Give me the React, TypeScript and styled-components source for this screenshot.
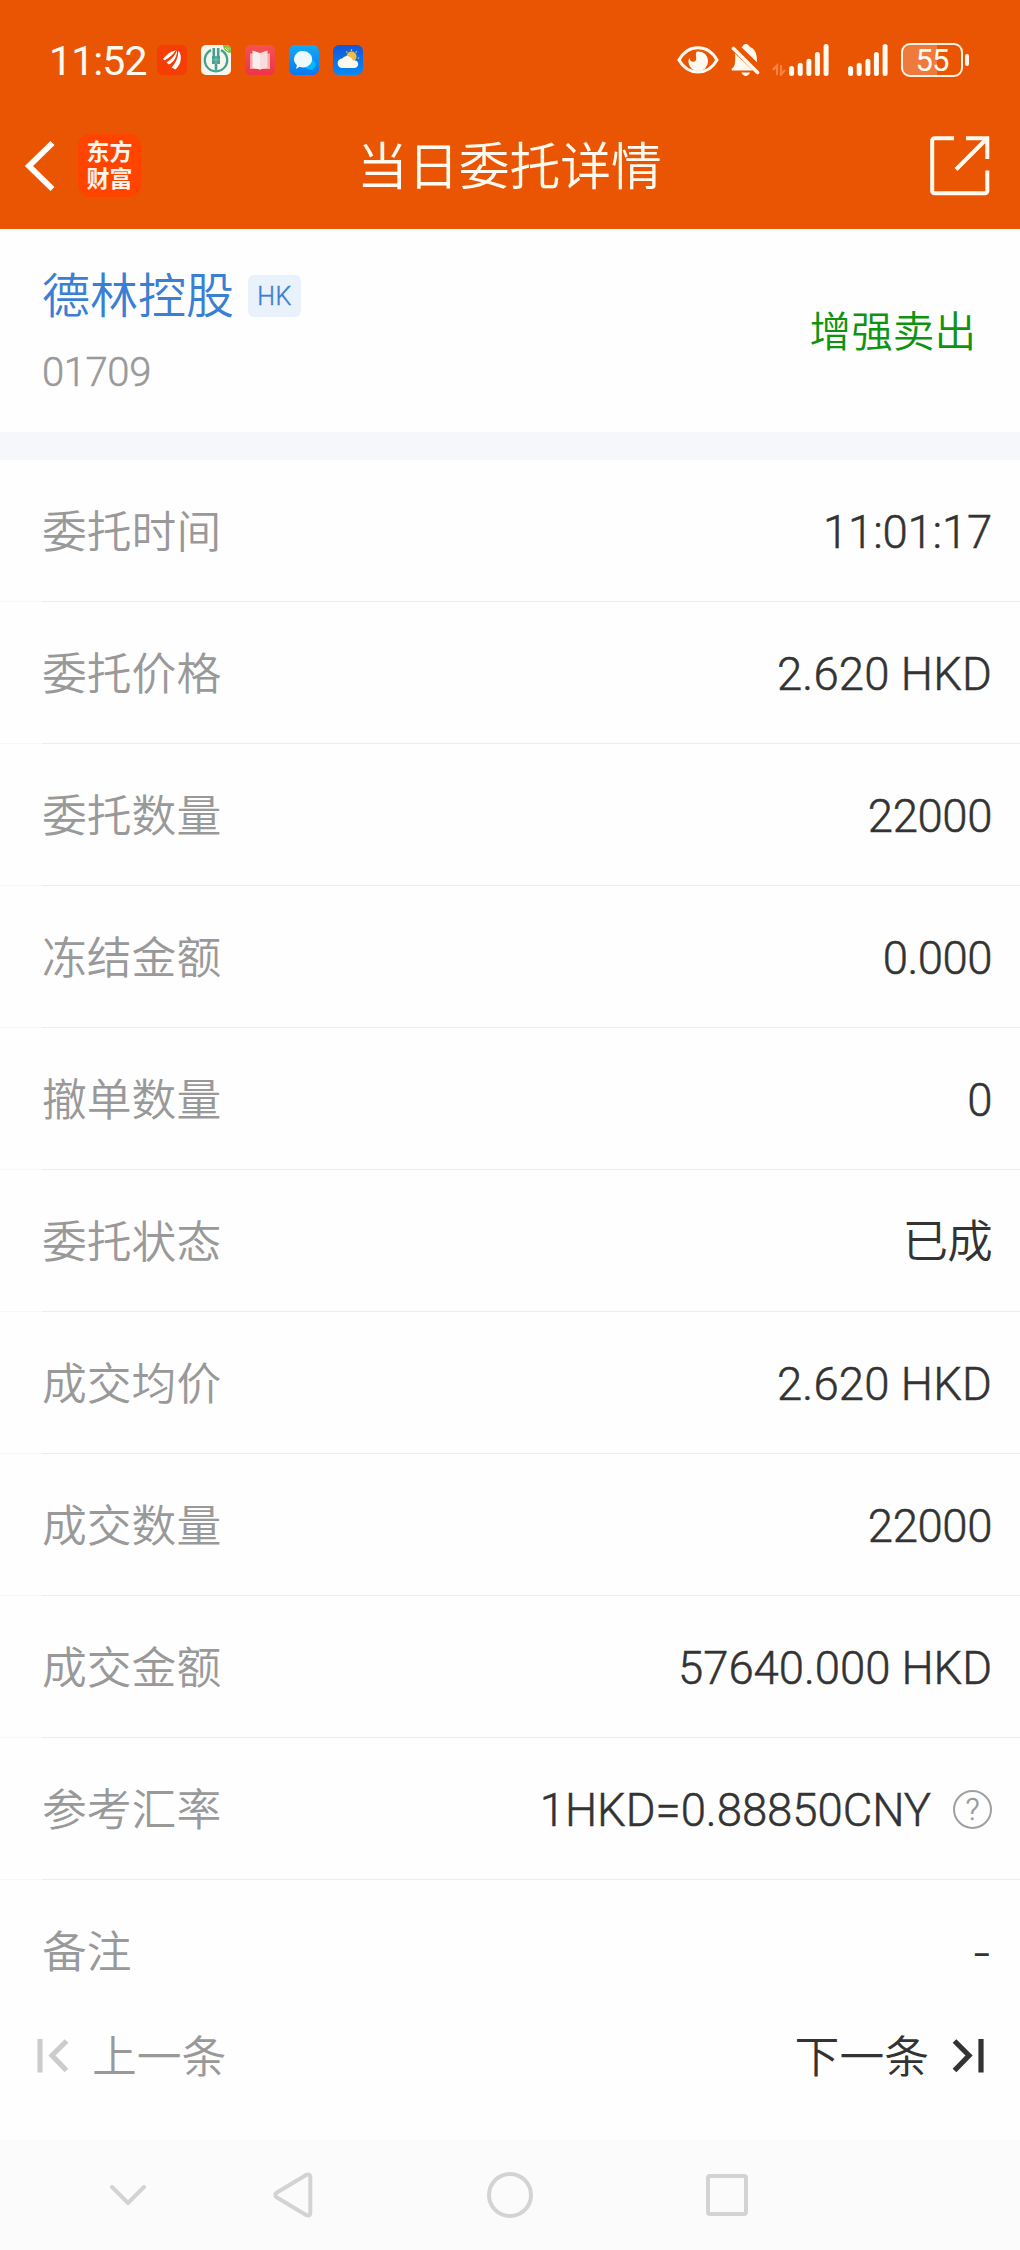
import React from "react";
import styled, { createGlobalStyle } from "styled-components";

const GlobalStyle = createGlobalStyle`
  *, *::before, *::after { box-sizing: border-box; }
  body {
    margin: 0;
    background: #fefefe;
    font-family: Roboto, "Noto Sans CJK SC", sans-serif;
    -webkit-font-smoothing: antialiased;
  }
`;

const Screen = styled.main`
  display: flex;
  flex-direction: column;
  width: 1020px;
  height: 2250px;
  overflow: hidden;
  background: #fefefe;
  font-weight: 350;
`;

const Header = styled.header`
  display: flex;
  flex-direction: column;
  height: 229px;
  flex: none;
  background: #e95503;
  color: #fffaf0;
`;

const StatusBar = styled.div`
  display: flex;
  justify-content: space-between;
  align-items: center;
  height: 102px;
  padding: 18px 51px 0 49px;
  font-weight: 400;
`;

const StatusGroup = styled.div`
  display: flex;
  align-items: center;
`;

const Clock = styled.span`
  width: 108px;
  padding-top: 2px;
  font-size: 41px;
  line-height: 42px;
  letter-spacing: -0.9px;
  white-space: nowrap;
`;

const AppIcons = styled.div`
  display: flex;
  gap: 14px;
`;

const TitleBar = styled.div`
  display: grid;
  grid-template-columns: 1fr auto 1fr;
  align-items: center;
  height: 127px;
  padding: 0 30px 0 24px;
`;

const TitleLeft = styled.div`
  display: flex;
  align-items: center;
  gap: 22px;
`;

const TitleRight = styled.div`
  display: flex;
  justify-content: flex-end;
`;

const Title = styled.h1`
  margin: 0;
  padding: 4px 0 0 5px;
  font-size: 50.8px;
  line-height: 60px;
  font-weight: inherit;
`;

const Brand = styled.div`
  display: flex;
  flex-direction: column;
  align-items: center;
  justify-content: center;
  width: 63px;
  height: 63px;
  border-radius: 12px;
  background: #ff4400;
  color: #fff4ec;
  font-size: 23px;
  line-height: 27px;
  font-weight: 700;
`;

const Stock = styled.section`
  display: flex;
  justify-content: space-between;
  align-items: center;
  height: 203px;
  flex: none;
  padding: 0 44px 0 42px;
`;

const StockInfo = styled.div`
  display: flex;
  flex-direction: column;
  gap: 28px;
  padding-top: 8px;
`;

const StockName = styled.div`
  display: flex;
  align-items: center;
  gap: 14px;
  height: 48px;
  font-size: 48px;
  line-height: 48px;
  color: #3b7fd4;
`;

const NameText = styled.span`
  padding-top: 2px;
`;

const Market = styled.span`
  width: 53px;
  height: 42px;
  border-radius: 6px;
  background: #e9f1fb;
  font-size: 25px;
  line-height: 44px;
  letter-spacing: 0.4px;
  text-align: center;
  -webkit-text-stroke: 0.4px currentColor;
`;

const Code = styled.div`
  font-size: 40px;
  line-height: 48px;
  letter-spacing: -0.4px;
  padding-top: 1px;
  -webkit-text-stroke: 0.5px currentColor;
  color: #999;
`;

const Side = styled.div`
  padding-top: 5px;
  font-size: 41.6px;
  line-height: 50px;
  color: #0f9410;
`;

const Gap = styled.div`
  height: 28px;
  flex: none;
  background: #f6f7fa;
`;

const List = styled.dl`
  margin: 0;
  flex: none;
`;

const Row = styled.div<{ $last?: boolean }>`
  display: flex;
  align-items: center;
  justify-content: space-between;
  height: 142px;
  padding: 0 28px 0 42px;
  background: ${(p) =>
    p.$last
      ? "none"
      : "linear-gradient(90deg, #f7f7f7 42px, #ebebeb 42px) bottom / 100% 1px no-repeat"};
`;

const Label = styled.dt`
  padding-top: 3px;
  font-size: 44.8px;
  line-height: 60px;
  color: #999;
`;

const Value = styled.dd`
  display: flex;
  align-items: center;
  gap: 22px;
  margin: 0;
  color: #333;
`;

const Amount = styled.span<{ $spacing?: number; $kind: "number" | "dash" | "text" }>`
  padding-top: 3px;
  font-family: ${(p) => (p.$kind === "dash" ? "Inter, sans-serif" : "inherit")};
  font-size: 45.5px;
  line-height: 60px;
  letter-spacing: ${(p) => p.$spacing ?? 0}px;
  -webkit-text-stroke: ${(p) => (p.$kind === "number" ? "0.5px" : "0")} currentColor;
`;

const Pager = styled.nav`
  display: flex;
  justify-content: space-between;
  height: 118px;
  flex: none;
  padding: 4px 36px 0 37px;
`;

const PagerLink = styled.div<{ $disabled?: boolean }>`
  display: flex;
  align-items: center;
  gap: 23px;
  height: 60px;
  font-size: 44.8px;
  line-height: 60px;
  color: ${(p) => (p.$disabled ? "#999" : "#333")};
`;

const PagerText = styled.span`
  padding-top: 3px;
`;

const SystemBar = styled.div`
  display: grid;
  grid-template-columns: 163px 214px 219px 42px;
  align-items: center;
  height: 110px;
  flex: none;
  padding-left: 110px;
  background: #fbfbfb;
`;

const TileFrame = styled.svg`
  display: block;
  width: 30px;
  height: 30px;
`;

const EastMoneyTile = () => (
  <TileFrame viewBox="0 0 30 30">
    <rect width="30" height="30" rx="6" fill="#f53d05" />
    <path d="M6 14C9.500 9.500 13.500 6.300 19 5.200C16.500 9.500 12 13 7.500 15.500Z" fill="#fff" />
    <path d="M9.500 17.500C14.500 14.500 18 10.500 20 5.200C21 10.500 18 16 12 19.500Z" fill="#fff" />
    <path d="M14.500 22.500C18.500 18.500 21.300 13 21.300 5.500C25.500 10.500 24.500 19 18.500 24.500Z" fill="#fff" />
    <path d="M6.500 16.500C13 13.500 17 9.500 19.600 5.200M12 20.500C17.500 17 20.500 12 20.700 5.200" fill="none" stroke="#f53d05" strokeWidth="1" />
  </TileFrame>
);

const BankTile = () => (
  <TileFrame viewBox="0 0 30 30">
    <rect width="30" height="30" rx="5" fill="#f8f6ec" />
    <path d="M22 0h3a5 5 0 0 1 5 5v3c-4 0-8-3-8-8Z" fill="#7fc241" />
    <path d="M24 3l3 3M26 2.500l2 2" stroke="#e5f5d2" strokeWidth="1" />
    <path d="M10 5.100a11.200 11.200 0 1 0 10 0" fill="none" stroke="#45a191" strokeWidth="2.300" />
    <path d="M12.800 3v9M17.200 3v9M15 18v7" stroke="#45a191" strokeWidth="2.600" />
    <path d="M11 11h8v8h-8Z" fill="#45a191" />
    <path d="M11.500 14.800h7M15 11v8" stroke="#8cc7bb" strokeWidth=".8" />
  </TileFrame>
);

const BookTile = () => (
  <TileFrame viewBox="0 0 30 30">
    <defs>
      <linearGradient id="book" x2="0" y2="1">
        <stop stopColor="#f45353" />
        <stop offset="1" stopColor="#ee3349" />
      </linearGradient>
    </defs>
    <rect width="30" height="30" rx="6" fill="url(#book)" />
    <path d="M5 8.500h20v15.500H16l-1 1-1-1H5Z" fill="#f9a9ab" />
    <path d="M7.500 5.500l7.500 2.500v16.500l-7.500-2Z" fill="#fdeeee" />
    <path d="M22.500 5.500L15 8v16.500l7.500-2Z" fill="#fbdcdc" />
  </TileFrame>
);

const ChatTile = () => (
  <TileFrame viewBox="0 0 30 30">
    <defs>
      <linearGradient id="chat" x2="0" y2="1">
        <stop stopColor="#12aaf4" />
        <stop offset="1" stopColor="#0678f2" />
      </linearGradient>
    </defs>
    <rect width="30" height="30" rx="6" fill="url(#chat)" />
    <path d="M15 20.500a6 4.600 0 1 1 8.500 3l1 1.500-4-.6a6 5 0 0 1-5.500-3.900Z" fill="#06b9fb" />
    <path d="M14 6a9 8.200 0 1 1-3.500 15.700L7 24l.9-3.800A8.700 8.200 0 0 1 14 6Z" fill="#eef9ff" />
  </TileFrame>
);

const WeatherTile = () => (
  <TileFrame viewBox="0 0 30 30">
    <defs>
      <linearGradient id="sky" x2="0" y2="1">
        <stop stopColor="#1257d8" />
        <stop offset="1" stopColor="#078af5" />
      </linearGradient>
    </defs>
    <rect width="30" height="30" rx="6" fill="url(#sky)" />
    <circle cx="18.500" cy="11.500" r="5" fill="#f4bd3e" />
    <path d="M18.500 4.300v1.700M13.300 6.500l1 1M23.700 6.500l-1 1M24.700 13h1.500" stroke="#f4cd63" strokeWidth="1.200" />
    <path d="M9.500 23a4.700 4.700 0 0 1-.4-9.400 6 6 0 0 1 10.700 2A3.900 3.900 0 1 1 20.500 23Z" fill="#fffaf0" />
  </TileFrame>
);

const EyeIcon = () => (
  <svg width="42" height="30" viewBox="0 0 42 30">
    <path d="M2 15C11-1.500 31-1.500 40 15C31 31 11 31 2 15Z" fill="none" stroke="currentColor" strokeWidth="3" />
    <path d="M20 6.500C27 6 31.500 11 31 17A9.800 9.800 0 0 1 11.500 17.500C11.200 15.500 11.800 14 12.500 13C13 16 15 17.500 17.500 16.500C21.500 14.500 17 10 20 6.500Z" fill="currentColor" />
  </svg>
);

const MutedBellIcon = () => (
  <svg width="29" height="32" viewBox="0 0 29 32">
    <path d="M10.500 3.200C12 2.500 12.500 0 15 0s3 2.500 5 3.500c4 2 6 6 6 14.700Z" fill="currentColor" />
    <path d="M4 9.500L22 26.500H1c-.8-1.500-.4-2.500 1-2.800C4.300 21.500 4.500 16 4 9.500ZM10.500 28.500h8.500c-1.500 4.500-7 4.500-8.500 0Z" fill="currentColor" />
    <path d="M2.500 4.500L26.500 28.500" stroke="currentColor" strokeWidth="3.600" strokeLinecap="round" />
  </svg>
);

const DataArrows = () => (
  <svg width="14" height="32" viewBox="0 0 14 32">
    <path d="M5 31V21.500L.8 26M9 21v9.500L13 26" fill="none" stroke="#fb8144" strokeWidth="2.200" />
  </svg>
);

const SignalIcon = () => (
  <svg width="41" height="32" viewBox="0 0 41 32">
    <path
      d="M2.600 24.500v5M11.200 21.300v8.200M19.900 17.300v12.200M28.400 10.500v19M37.100 2.600v26.900"
      stroke="currentColor"
      strokeWidth="5"
      strokeLinecap="round"
    />
  </svg>
);

const Battery = styled.div`
  position: relative;
  width: 62px;
  height: 34px;
  margin: -1px 6px 0 12px;
  border: 2px solid #fff3e4;
  border-radius: 9px;
  background: linear-gradient(90deg, #ee7a3e 58%, transparent 58%);
  font-size: 31px;
  line-height: 32px;
  letter-spacing: -1px;
  text-align: center;

  &::after {
    content: "";
    position: absolute;
    right: -8px;
    top: 9px;
    width: 4px;
    height: 12px;
    border-radius: 2px;
    background: #fff3e4;
  }
`;

const Push = styled.span<{ $left: number }>`
  display: flex;
  margin-left: ${(p) => p.$left}px;
`;

const BackIcon = () => (
  <svg width="32" height="52" viewBox="0 0 32 52">
    <path d="M28.500 3L5 26L28.500 49" fill="none" stroke="#fff" strokeWidth="5.800" />
  </svg>
);

const ShareIcon = () => (
  <svg width="60" height="60" viewBox="0 0 60 60">
    <path
      d="M24 2.200H4.500a2.300 2.300 0 0 0-2.300 2.300v50.500a2.300 2.300 0 0 0 2.300 2.300h50.500a2.300 2.300 0 0 0 2.300-2.300V34.500M36 2.200h21.300V23M56 3.500L26 33.500"
      fill="none"
      stroke="currentColor"
      strokeWidth="4"
    />
  </svg>
);

const HelpIcon = styled.span`
  width: 39px;
  height: 39px;
  border: 2px solid #a0a0a0;
  border-radius: 50%;
  color: #999;
  font-size: 31px;
  line-height: 36px;
  text-align: center;
  -webkit-text-stroke: 0.4px currentColor;
`;

const SkipIcon = ({ color, flip }: { color: string; flip?: boolean }) => (
  <svg width="32" height="34" viewBox="0 0 32 34">
    <path
      d="M3 0v33.500M29.500 2L15 16.500L29.500 31.500"
      transform={flip ? "translate(32 0) scale(-1 1)" : undefined}
      fill="none"
      stroke={color}
      strokeWidth="5.200"
    />
  </svg>
);

const navStroke = {
  fill: "none",
  stroke: "#d3d3d3",
  strokeWidth: 4,
  strokeLinecap: "round" as const,
  strokeLinejoin: "round" as const,
};

type OrderField = {
  label: string;
  value: string;
  kind?: "number" | "dash" | "text";
  spacing?: number;
  help?: boolean;
};

const fields: OrderField[] = [
  { label: "委托时间", value: "11:01:17", spacing: -0.2 },
  { label: "委托价格", value: "2.620 HKD", spacing: 0.15 },
  { label: "委托数量", value: "22000", spacing: -0.4 },
  { label: "冻结金额", value: "0.000", spacing: -0.5 },
  { label: "撤单数量", value: "0", spacing: -0.4 },
  { label: "委托状态", value: "已成", kind: "text", spacing: -0.7 },
  { label: "成交均价", value: "2.620 HKD", spacing: 0.15 },
  { label: "成交数量", value: "22000", spacing: -0.4 },
  { label: "成交金额", value: "57640.000 HKD", spacing: -0.05 },
  { label: "参考汇率", value: "1HKD=0.88850CNY", spacing: -0.05, help: true },
  { label: "备注", value: "-", kind: "dash" },
];

export default function App() {
  return (
    <Screen>
      <GlobalStyle />
      <Header>
        <StatusBar>
          <StatusGroup>
            <Clock>11:52</Clock>
            <AppIcons>
              <EastMoneyTile />
              <BankTile />
              <BookTile />
              <ChatTile />
              <WeatherTile />
            </AppIcons>
          </StatusGroup>
          <StatusGroup>
            <EyeIcon />
            <Push $left={12}><MutedBellIcon /></Push>
            <Push $left={12}><DataArrows /></Push>
            <Push $left={3}><SignalIcon /></Push>
            <Push $left={18}><SignalIcon /></Push>
            <Battery>55</Battery>
          </StatusGroup>
        </StatusBar>
        <TitleBar>
          <TitleLeft>
            <BackIcon />
            <Brand>
              <span>东方</span>
              <span>财富</span>
            </Brand>
          </TitleLeft>
          <Title>当日委托详情</Title>
          <TitleRight>
            <ShareIcon />
          </TitleRight>
        </TitleBar>
      </Header>

      <Stock>
        <StockInfo>
          <StockName>
            <NameText>德林控股</NameText>
            <Market>HK</Market>
          </StockName>
          <Code>01709</Code>
        </StockInfo>
        <Side>增强卖出</Side>
      </Stock>
      <Gap />

      <List>
        {fields.map((field, i) => (
          <Row key={field.label} $last={i === fields.length - 1}>
            <Label>{field.label}</Label>
            <Value>
              <Amount $spacing={field.spacing} $kind={field.kind ?? "number"}>
                {field.value}
              </Amount>
              {field.help && <HelpIcon>?</HelpIcon>}
            </Value>
          </Row>
        ))}
      </List>

      <Pager>
        <PagerLink $disabled>
          <SkipIcon color="#ccc" />
          <PagerText>上一条</PagerText>
        </PagerLink>
        <PagerLink>
          <PagerText>下一条</PagerText>
          <SkipIcon color="#333" flip />
        </PagerLink>
      </Pager>

      <SystemBar>
        <svg width="36" height="22" viewBox="0 0 36 22">
          <path d="M2 3L18 19L34 3" {...navStroke} />
        </svg>
        <svg width="40" height="46" viewBox="0 0 40 46">
          <path d="M33.500 2.800L3.500 20.800Q1 23 3.500 25.200L33.500 43.200Q37 44.500 37.300 41V5Q37 1.500 33.500 2.800Z" {...navStroke} />
        </svg>
        <svg width="46" height="46" viewBox="0 0 46 46">
          <circle cx="23" cy="23" r="21" {...navStroke} />
        </svg>
        <svg width="42" height="42" viewBox="0 0 42 42">
          <rect x="2" y="2" width="38" height="38" rx="2" {...navStroke} />
        </svg>
      </SystemBar>
    </Screen>
  );
}
